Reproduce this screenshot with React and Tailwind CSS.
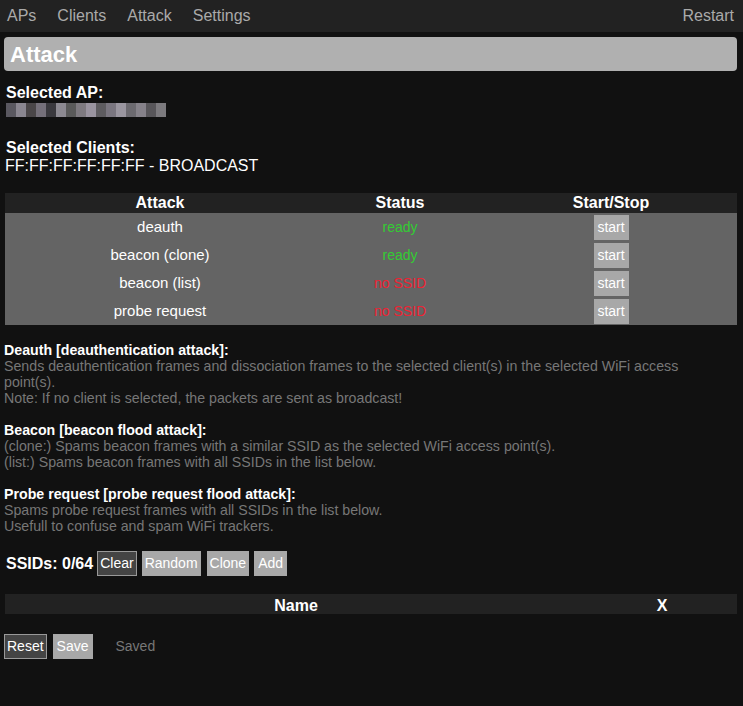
export default function App() {
  const rows = [
    { name: "deauth", status: "ready", ok: true },
    { name: "beacon (clone)", status: "ready", ok: true },
    { name: "beacon (list)", status: "no SSID", ok: false },
    { name: "probe request", status: "no SSID", ok: false },
  ];
  const blur = ["#5a5860","#8a8690","#4a4648","#75707a","#3a393e","#8d8a92","#5a5a5a","#7e7a80","#9a94a0","#5e5c60","#7a7680","#9a96a0","#6c6a70","#86828a","#58565a","#7c7a7e"];
  return (
    <div className="min-h-[706px] bg-[#111111] text-white" style={{ fontFamily: '"Liberation Sans", Arial, sans-serif' }}>
      <nav className="flex h-[32px] items-center bg-[#222222] pl-[7px] pr-[9px] text-[16px] text-[#aaaaaa]">
        <span>APs</span>
        <span className="ml-[21px]">Clients</span>
        <span className="ml-[21px]">Attack</span>
        <span className="ml-[21px]">Settings</span>
        <span className="ml-auto">Restart</span>
      </nav>
      <div className="pr-[6px]">
        <div className="ml-[4px] mt-[5px] flex h-[34px] items-center rounded-[4px] bg-[#b0b0b0] pl-[6px] text-[22px] font-bold">Attack</div>

        <div className="mt-[13px] pl-[6px] text-[16px] font-bold leading-[18px]">Selected AP:</div>
        <div className="ml-[6px] mt-[1px] flex h-[14px] w-[162px] blur-[0.6px]">
          {blur.map((c, i) => (
            <div key={i} className="h-full w-[10px]" style={{ background: c }} />
          ))}
        </div>

        <div className="mt-[22px] pl-[6px] text-[16px] font-bold leading-[18px]">Selected Clients:</div>
        <div className="pl-[5px] text-[16px] leading-[18px]">FF:FF:FF:FF:FF:FF - BROADCAST</div>

        <div className="ml-[5px] mt-[18px] text-[16px]">
          <div className="grid h-[20px] grid-cols-[310px_170px_1fr] items-center bg-[#222222] font-bold leading-[20px]">
            <div className="text-center">Attack</div>
            <div className="text-center">Status</div>
            <div className="text-center">Start/Stop</div>
          </div>
          {rows.map((r) => (
            <div key={r.name} className="grid h-[28px] grid-cols-[310px_170px_1fr] items-center bg-[#646464] text-[15px]">
              <div className="text-center">{r.name}</div>
              <div className={"text-center text-[14px] " + (r.ok ? "text-[#33cc33]" : "text-[#ee2233]")}>{r.status}</div>
              <div className="flex justify-center">
                <button className="h-[25px] w-[35px] bg-[#a8a8a8] text-[14px] text-white">start</button>
              </div>
            </div>
          ))}
        </div>

        <div className="mt-[17px] pl-[4px] pr-[8px] text-[14.2px] leading-[16px]">
          <div className="font-bold">Deauth [deauthentication attack]:</div>
          <div className="text-[#777777]">Sends deauthentication frames and dissociation frames to the selected client(s) in the selected WiFi access point(s).</div>
          <div className="text-[#777777]">Note: If no client is selected, the packets are sent as broadcast!</div>
          <div className="mt-[16px] font-bold">Beacon [beacon flood attack]:</div>
          <div className="text-[#777777]">(clone:) Spams beacon frames with a similar SSID as the selected WiFi access point(s).</div>
          <div className="text-[#777777]">(list:) Spams beacon frames with all SSIDs in the list below.</div>
          <div className="mt-[16px] font-bold">Probe request [probe request flood attack]:</div>
          <div className="text-[#777777]">Spams probe request frames with all SSIDs in the list below.</div>
          <div className="text-[#777777]">Usefull to confuse and spam WiFi trackers.</div>
        </div>

        <div className="mt-[17px] flex items-center pl-[6px]">
          <span className="mr-[4px] text-[16px] font-bold">SSIDs: 0/64</span>
          <button className="h-[25px] border border-[#999999] bg-[#444444] px-[2px] text-[14px] text-white">Clear</button>
          <button className="ml-[5px] h-[25px] bg-[#a8a8a8] px-[3px] text-[14px] text-white">Random</button>
          <button className="ml-[6px] h-[25px] bg-[#a8a8a8] px-[3px] text-[14px] text-white">Clone</button>
          <button className="ml-[5px] h-[25px] bg-[#a8a8a8] px-[4px] text-[14px] text-white">Add</button>
        </div>

        <div className="ml-[5px] mt-[18px] grid h-[20px] grid-cols-[1fr_150px] items-center bg-[#222222] text-[16px] font-bold">
          <div className="text-center">Name</div>
          <div className="text-center">X</div>
        </div>

        <div className="mt-[20px] flex items-center pl-[4px]">
          <button className="h-[25px] border border-[#999999] bg-[#444444] px-[2px] text-[14px] text-white">Reset</button>
          <button className="ml-[6px] h-[25px] bg-[#a8a8a8] px-[4px] text-[14px] text-white">Save</button>
          <span className="ml-[23px] text-[14px] text-[#777777]">Saved</span>
        </div>
      </div>
    </div>
  );
}
